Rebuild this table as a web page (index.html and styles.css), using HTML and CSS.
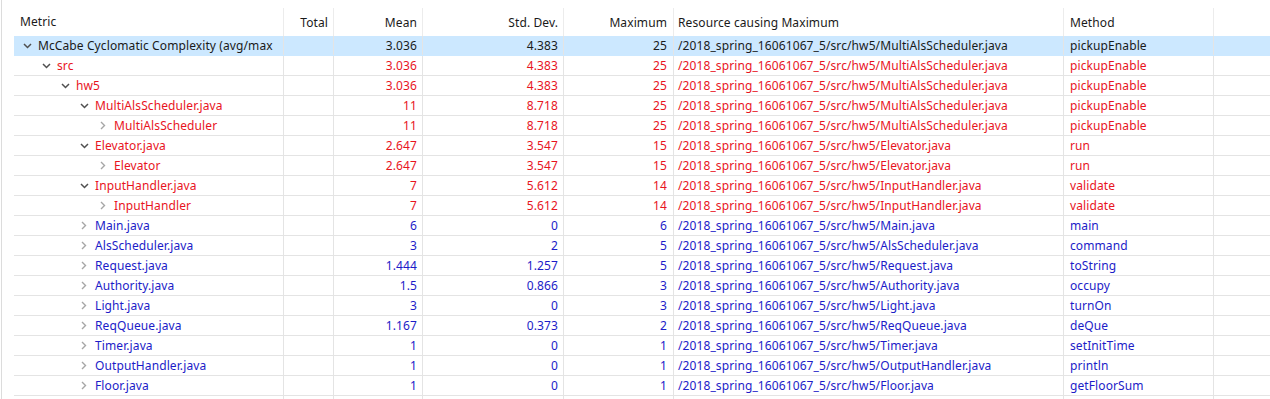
FILE: index.html
```html
<!DOCTYPE html>
<html lang="en">

<head>
    <meta charset="UTF-8">
    <title>Metrics</title>
    <link rel="stylesheet" href="styles.css">
</head>

<body>
    <div class="view">
        <div class="head">
            <div class="cell c-metric">Metric</div>
            <div class="cell c-total num">Total</div>
            <div class="cell c-mean num">Mean</div>
            <div class="cell c-std num">Std. Dev.</div>
            <div class="cell c-max num">Maximum</div>
            <div class="cell c-res">Resource causing Maximum</div>
            <div class="cell c-meth">Method</div>
            <div class="cell c-fill"></div>
        </div>

        <div class="row selected">
            <div class="cell c-metric"><span class="tog open l0"></span><span class="name">McCabe Cyclomatic Complexity (avg/max</span></div>
            <div class="cell c-total num"></div>
            <div class="cell c-mean num">3.036</div>
            <div class="cell c-std num">4.383</div>
            <div class="cell c-max num">25</div>
            <div class="cell c-res">/2018_spring_16061067_5/src/hw5/MultiAlsScheduler.java</div>
            <div class="cell c-meth">pickupEnable</div>
            <div class="cell c-fill"></div>
        </div>
        <div class="row red">
            <div class="cell c-metric"><span class="tog open l1"></span><span class="name">src</span></div>
            <div class="cell c-total num"></div>
            <div class="cell c-mean num">3.036</div>
            <div class="cell c-std num">4.383</div>
            <div class="cell c-max num">25</div>
            <div class="cell c-res">/2018_spring_16061067_5/src/hw5/MultiAlsScheduler.java</div>
            <div class="cell c-meth">pickupEnable</div>
            <div class="cell c-fill"></div>
        </div>
        <div class="row red">
            <div class="cell c-metric"><span class="tog open l2"></span><span class="name">hw5</span></div>
            <div class="cell c-total num"></div>
            <div class="cell c-mean num">3.036</div>
            <div class="cell c-std num">4.383</div>
            <div class="cell c-max num">25</div>
            <div class="cell c-res">/2018_spring_16061067_5/src/hw5/MultiAlsScheduler.java</div>
            <div class="cell c-meth">pickupEnable</div>
            <div class="cell c-fill"></div>
        </div>
        <div class="row red">
            <div class="cell c-metric"><span class="tog open l3"></span><span class="name">MultiAlsScheduler.java</span></div>
            <div class="cell c-total num"></div>
            <div class="cell c-mean num">11</div>
            <div class="cell c-std num">8.718</div>
            <div class="cell c-max num">25</div>
            <div class="cell c-res">/2018_spring_16061067_5/src/hw5/MultiAlsScheduler.java</div>
            <div class="cell c-meth">pickupEnable</div>
            <div class="cell c-fill"></div>
        </div>
        <div class="row red">
            <div class="cell c-metric"><span class="tog l4"></span><span class="name">MultiAlsScheduler</span></div>
            <div class="cell c-total num"></div>
            <div class="cell c-mean num">11</div>
            <div class="cell c-std num">8.718</div>
            <div class="cell c-max num">25</div>
            <div class="cell c-res">/2018_spring_16061067_5/src/hw5/MultiAlsScheduler.java</div>
            <div class="cell c-meth">pickupEnable</div>
            <div class="cell c-fill"></div>
        </div>
        <div class="row red">
            <div class="cell c-metric"><span class="tog open l3"></span><span class="name">Elevator.java</span></div>
            <div class="cell c-total num"></div>
            <div class="cell c-mean num">2.647</div>
            <div class="cell c-std num">3.547</div>
            <div class="cell c-max num">15</div>
            <div class="cell c-res">/2018_spring_16061067_5/src/hw5/Elevator.java</div>
            <div class="cell c-meth">run</div>
            <div class="cell c-fill"></div>
        </div>
        <div class="row red">
            <div class="cell c-metric"><span class="tog l4"></span><span class="name">Elevator</span></div>
            <div class="cell c-total num"></div>
            <div class="cell c-mean num">2.647</div>
            <div class="cell c-std num">3.547</div>
            <div class="cell c-max num">15</div>
            <div class="cell c-res">/2018_spring_16061067_5/src/hw5/Elevator.java</div>
            <div class="cell c-meth">run</div>
            <div class="cell c-fill"></div>
        </div>
        <div class="row red">
            <div class="cell c-metric"><span class="tog open l3"></span><span class="name">InputHandler.java</span></div>
            <div class="cell c-total num"></div>
            <div class="cell c-mean num">7</div>
            <div class="cell c-std num">5.612</div>
            <div class="cell c-max num">14</div>
            <div class="cell c-res">/2018_spring_16061067_5/src/hw5/InputHandler.java</div>
            <div class="cell c-meth">validate</div>
            <div class="cell c-fill"></div>
        </div>
        <div class="row red">
            <div class="cell c-metric"><span class="tog l4"></span><span class="name">InputHandler</span></div>
            <div class="cell c-total num"></div>
            <div class="cell c-mean num">7</div>
            <div class="cell c-std num">5.612</div>
            <div class="cell c-max num">14</div>
            <div class="cell c-res">/2018_spring_16061067_5/src/hw5/InputHandler.java</div>
            <div class="cell c-meth">validate</div>
            <div class="cell c-fill"></div>
        </div>
        <div class="row blue">
            <div class="cell c-metric"><span class="tog l3"></span><span class="name">Main.java</span></div>
            <div class="cell c-total num"></div>
            <div class="cell c-mean num">6</div>
            <div class="cell c-std num">0</div>
            <div class="cell c-max num">6</div>
            <div class="cell c-res">/2018_spring_16061067_5/src/hw5/Main.java</div>
            <div class="cell c-meth">main</div>
            <div class="cell c-fill"></div>
        </div>
        <div class="row blue">
            <div class="cell c-metric"><span class="tog l3"></span><span class="name">AlsScheduler.java</span></div>
            <div class="cell c-total num"></div>
            <div class="cell c-mean num">3</div>
            <div class="cell c-std num">2</div>
            <div class="cell c-max num">5</div>
            <div class="cell c-res">/2018_spring_16061067_5/src/hw5/AlsScheduler.java</div>
            <div class="cell c-meth">command</div>
            <div class="cell c-fill"></div>
        </div>
        <div class="row blue">
            <div class="cell c-metric"><span class="tog l3"></span><span class="name">Request.java</span></div>
            <div class="cell c-total num"></div>
            <div class="cell c-mean num">1.444</div>
            <div class="cell c-std num">1.257</div>
            <div class="cell c-max num">5</div>
            <div class="cell c-res">/2018_spring_16061067_5/src/hw5/Request.java</div>
            <div class="cell c-meth">toString</div>
            <div class="cell c-fill"></div>
        </div>
        <div class="row blue">
            <div class="cell c-metric"><span class="tog l3"></span><span class="name">Authority.java</span></div>
            <div class="cell c-total num"></div>
            <div class="cell c-mean num">1.5</div>
            <div class="cell c-std num">0.866</div>
            <div class="cell c-max num">3</div>
            <div class="cell c-res">/2018_spring_16061067_5/src/hw5/Authority.java</div>
            <div class="cell c-meth">occupy</div>
            <div class="cell c-fill"></div>
        </div>
        <div class="row blue">
            <div class="cell c-metric"><span class="tog l3"></span><span class="name">Light.java</span></div>
            <div class="cell c-total num"></div>
            <div class="cell c-mean num">3</div>
            <div class="cell c-std num">0</div>
            <div class="cell c-max num">3</div>
            <div class="cell c-res">/2018_spring_16061067_5/src/hw5/Light.java</div>
            <div class="cell c-meth">turnOn</div>
            <div class="cell c-fill"></div>
        </div>
        <div class="row blue">
            <div class="cell c-metric"><span class="tog l3"></span><span class="name">ReqQueue.java</span></div>
            <div class="cell c-total num"></div>
            <div class="cell c-mean num">1.167</div>
            <div class="cell c-std num">0.373</div>
            <div class="cell c-max num">2</div>
            <div class="cell c-res">/2018_spring_16061067_5/src/hw5/ReqQueue.java</div>
            <div class="cell c-meth">deQue</div>
            <div class="cell c-fill"></div>
        </div>
        <div class="row blue">
            <div class="cell c-metric"><span class="tog l3"></span><span class="name">Timer.java</span></div>
            <div class="cell c-total num"></div>
            <div class="cell c-mean num">1</div>
            <div class="cell c-std num">0</div>
            <div class="cell c-max num">1</div>
            <div class="cell c-res">/2018_spring_16061067_5/src/hw5/Timer.java</div>
            <div class="cell c-meth">setInitTime</div>
            <div class="cell c-fill"></div>
        </div>
        <div class="row blue">
            <div class="cell c-metric"><span class="tog l3"></span><span class="name">OutputHandler.java</span></div>
            <div class="cell c-total num"></div>
            <div class="cell c-mean num">1</div>
            <div class="cell c-std num">0</div>
            <div class="cell c-max num">1</div>
            <div class="cell c-res">/2018_spring_16061067_5/src/hw5/OutputHandler.java</div>
            <div class="cell c-meth">println</div>
            <div class="cell c-fill"></div>
        </div>
        <div class="row blue">
            <div class="cell c-metric"><span class="tog l3"></span><span class="name">Floor.java</span></div>
            <div class="cell c-total num"></div>
            <div class="cell c-mean num">1</div>
            <div class="cell c-std num">0</div>
            <div class="cell c-max num">1</div>
            <div class="cell c-res">/2018_spring_16061067_5/src/hw5/Floor.java</div>
            <div class="cell c-meth">getFloorSum</div>
            <div class="cell c-fill"></div>
        </div>
        <div class="row tail">
            <div class="cell c-metric"></div>
            <div class="cell c-total"></div>
            <div class="cell c-mean"></div>
            <div class="cell c-std"></div>
            <div class="cell c-max"></div>
            <div class="cell c-res"></div>
            <div class="cell c-meth"></div>
            <div class="cell c-fill"></div>
        </div>
    </div>
</body>

</html>
```

FILE: styles.css
```css
body {
    margin: 0;
    background: white;
    font-family: "Noto Sans", "Noto Sans CJK SC", sans-serif;
    font-size: 12px;
    letter-spacing: 0.1px;
    color: #1a1a1a;
    overflow: hidden;
}

.view {
    margin-left: 1px;
    border-left: 1px solid #dcdcdc;
    height: 399px;
    overflow: hidden;
}

.head,
.row {
    display: flex;
    margin-left: 12px;
}

.head {
    height: 36px;
}

.head .cell {
    margin-top: 8px;
    height: 28px;
    line-height: 30px;
    border-right-color: #ececec;
}

.row {
    box-sizing: border-box;
    height: 20px;
    line-height: 19px;
    border-bottom: 1px solid #e4e4e4;
}

.row.tail {
    border-bottom: none;
}

.cell {
    box-sizing: border-box;
    border-right: 1px solid #e4e4e4;
    white-space: nowrap;
    overflow: hidden;
    flex: none;
}

.num {
    text-align: right;
    padding-right: 5px;
}

.c-metric {
    width: 270px;
    display: flex;
    align-items: center;
}

.head .c-metric {
    padding-left: 6px;
}

.c-total { width: 50px; }
.c-mean { width: 89px; }
.c-std { width: 141px; }
.c-max { width: 110px; padding-right: 6px; }
.c-res { width: 390px; padding-left: 4px; }
.c-meth { width: 150px; padding-left: 6px; }

.c-fill {
    flex: 1;
    border-right: none;
}

.selected {
    background: #cce8ff;
    border-bottom-color: #cce8ff;
}

.red { color: #e8141e; }
.blue { color: #1c1cc8; }

/* tree toggles */
.tog {
    flex: none;
    width: 14px;
    height: 19px;
    margin-right: 4px;
    background-repeat: no-repeat;
    background-position: center;
    background-image: url("data:image/svg+xml,%3Csvg xmlns='http://www.w3.org/2000/svg' width='6' height='9'%3E%3Cpath d='M1 1l3.5 3.5L1 8' fill='none' stroke='%23a6a6a6' stroke-width='1.4'/%3E%3C/svg%3E");
}

.tog.open {
    background-image: url("data:image/svg+xml,%3Csvg xmlns='http://www.w3.org/2000/svg' width='9' height='6'%3E%3Cpath d='M1 1l3.5 3.5L8 1' fill='none' stroke='%23505050' stroke-width='1.5'/%3E%3C/svg%3E");
}

.l0 { margin-left: 6px; }
.l1 { margin-left: 25px; }
.l2 { margin-left: 44px; }
.l3 { margin-left: 63px; }
.l4 { margin-left: 82px; }
```
